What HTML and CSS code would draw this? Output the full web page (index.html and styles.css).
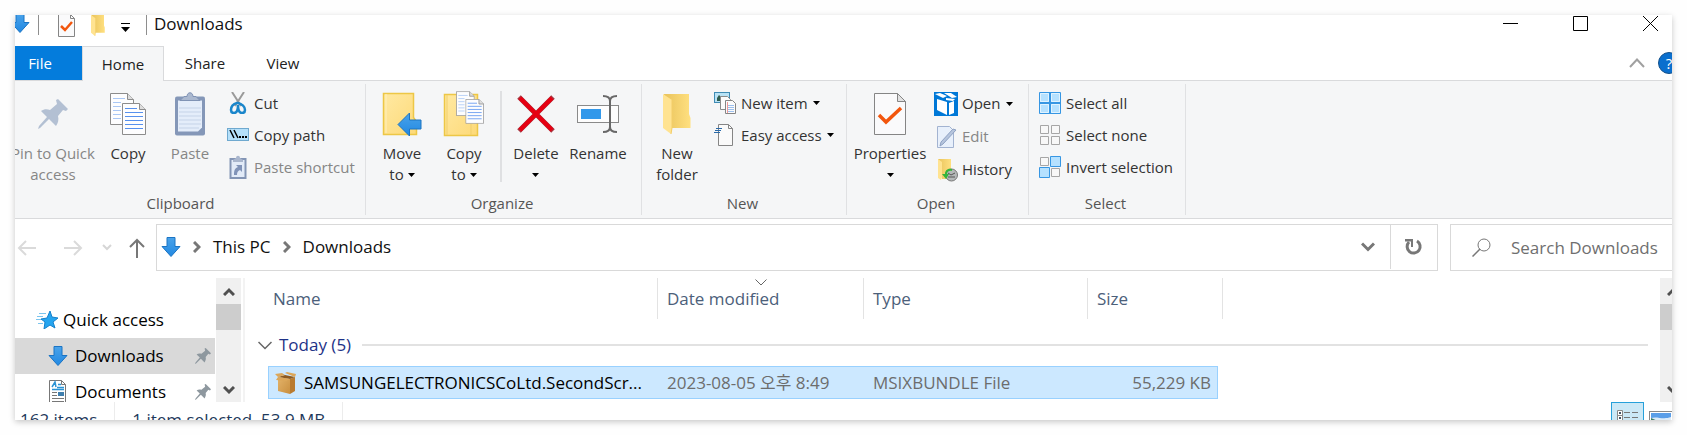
FILE: index.html
```html
<!DOCTYPE html>
<html lang="en">
<head>
<meta charset="utf-8">
<title>Downloads</title>
<link rel="stylesheet" href="styles.css">
</head>
<body>
<svg class="defs" width="0" height="0" aria-hidden="true">
  <defs>
    <linearGradient id="gBlue" x1="0" y1="0" x2="0" y2="1"><stop offset="0" stop-color="#4aa3ea"/><stop offset="1" stop-color="#2188e2"/></linearGradient>
    <linearGradient id="gFolder" x1="0" y1="0" x2="1" y2="1"><stop offset="0" stop-color="#ffe9a2"/><stop offset="1" stop-color="#fdd978"/></linearGradient>
    <linearGradient id="gFolderBack" x1="0" y1="0" x2="1" y2="0"><stop offset="0" stop-color="#e9c35c"/><stop offset="1" stop-color="#ffe080"/></linearGradient>
    <linearGradient id="gBox" x1="0" y1="0" x2="1" y2="1"><stop offset="0" stop-color="#e3b36a"/><stop offset="1" stop-color="#c98f3f"/></linearGradient>
    <symbol id="down" viewBox="0 0 20 20"><path d="M6 .5h8v9h5L10 19.500 1 9.500h5z" fill="url(#gBlue)" stroke="#1b74c4"/></symbol>
    <symbol id="caret" viewBox="0 0 7 4"><path d="M0 0h7L3.500 4z" fill="#000"/></symbol>
    <symbol id="pin" viewBox="0 0 30 30"><path d="M20 0l10 10-2 2-3-1-5 6c1 4 0 7-2 10l-7-7-9 9-2 1 1-3 8-9-6-6c3-2 6-2 9-1l7-6-1-4z"/></symbol>
    <symbol id="page" viewBox="0 0 24 32"><path d="M.5.500h17l6 6v25H.500z" fill="#fdfdfe" stroke="#8c8c8c"/><path d="M17.500.500v6h6" fill="#dedede" stroke="#8c8c8c"/></symbol>
    <symbol id="folder" viewBox="0 0 28 40"><path d="M1 0h25v20l1.500 4v10H5z" fill="url(#gFolderBack)"/><path d="M0 0l9 6v28l-1 6-8-6z" fill="#ffe391"/><path d="M9 6v28l-1 6" fill="none" stroke="#f3cd68"/></symbol>
    <symbol id="check" viewBox="0 0 32 42"><path d="M.5.500h23l8 8v33H.500z" fill="#fafafb" stroke="#858585"/><path d="M23.500.500v8h8z" fill="#e2e2e2" stroke="#858585"/><path d="M5 22l7 7L27 15" fill="none" stroke="#f2560d" stroke-width="3.500"/></symbol>
    <symbol id="chevUp" viewBox="0 0 12 9"><path d="M1 8l5-5 5 5" fill="none" stroke="#505050" stroke-width="3"/></symbol>
    <symbol id="chevDown" viewBox="0 0 12 9"><path d="M1 1l5 5 5-5" fill="none" stroke="#505050" stroke-width="3"/></symbol>
    <symbol id="crumb" viewBox="0 0 8 12"><path d="M1 1l5 5-5 5" fill="none" stroke="#777" stroke-width="3"/></symbol>
  </defs>
</svg>

<div class="window">
<div class="frame">
  <header class="titlebar">
    <div class="quickbar">
      <svg class="qb-down"><use href="#down"/></svg>
      <span class="bar"></span>
      <button class="icon-btn" aria-label="Properties"><svg width="17" height="22" viewBox="0 1 17 22"><path d="M.5.500h12l4 4v18H.500z" fill="#fafafb" stroke="#858585"/><path d="M12.500 0v4.500h4" fill="none" stroke="#858585"/><path d="M3 12l4 4 7-8" fill="none" stroke="#f2560d" stroke-width="2.500"/></svg></button>
      <button class="icon-btn" aria-label="New folder"><svg width="14" height="21" viewBox="0 0 28 40" preserveAspectRatio="none"><use href="#folder"/></svg></button>
      <button class="icon-btn customise" aria-label="Customize toolbar"><svg width="9" height="9" viewBox="0 0 9 9"><path d="M0 .5h9" stroke="#000"/><path d="M0 4h9L4.500 9z"/></svg></button>
      <span class="bar"></span>
    </div>
    <h1 class="title">Downloads</h1>
    <div class="caption">
      <button class="caption-btn" aria-label="Minimize"><svg width="15" height="15"><path d="M0 7.500h15" stroke="#000"/></svg></button>
      <button class="caption-btn" aria-label="Maximize"><svg width="15" height="15"><path d="M.5.500h14v14H.500z" fill="none" stroke="#000"/></svg></button>
      <button class="caption-btn" aria-label="Close"><svg width="15" height="15"><path d="M0 0l15 15M15 0L0 15" stroke="#000"/></svg></button>
    </div>
  </header>

  <nav class="tabs">
    <button class="tab tab-file">File</button>
    <button class="tab tab-active">Home</button>
    <button class="tab">Share</button>
    <button class="tab">View</button>
    <div class="tab-tools">
      <button class="icon-btn" aria-label="Collapse ribbon"><svg width="16" height="10" viewBox="0 0 16 10"><path d="M1 9l7-7.500L15 9" fill="none" stroke="#a0a0a0" stroke-width="2"/></svg></button>
      <button class="help" aria-label="Help">?</button>
    </div>
  </nav>

  <section class="ribbon">
    <div class="group clipboard">
      <div class="tools">
        <button class="big pin-btn disabled"><svg width="30" height="30" fill="#b3c0d3"><use href="#pin"/></svg><span>Pin to Quick<br>access</span></button>
        <button class="big"><svg width="36" height="42" viewBox="0 0 36 42"><g id="pages"><use href="#page" width="24" height="32"/><path d="M3 5.500h12M3 9.500h8M3 13.500h8M3 17.500h8M3 21.500h8M3 25.500h8" stroke="#a9c7f5"/><use href="#page" x="12" y="10" width="24" height="32"/><path d="M15 15.500h12M15 19.500h18M15 23.500h18M15 27.500h18M15 31.500h18M15 35.500h18" stroke="#5690ee"/></g></svg><span>Copy</span></button>
        <button class="big disabled"><svg width="30" height="43" viewBox="0 0 30 43"><rect y="4" width="30" height="39" rx="2" fill="#8497b8"/><path d="M3 8h24v27l-4 4H3z" fill="#e4edfa"/><path d="M4 15.500h22M4 19.500h22M4 23.500h22M4 27.500h22M4 31.500h22M4 35.500h20" stroke="#c5d3e8"/><path d="M5 8l4-4h3c0-5 6-5 6 0h3l4 4z" fill="#aab8cf" stroke="#8093b5"/></svg><span>Paste</span></button>
        <div class="stack">
          <button class="small"><svg width="22" height="22" viewBox="0 0 22 22"><path d="M5 0l9 14M17 0L8 14" stroke="#9a9a9a" stroke-width="2"/><path d="M10 11c-4 1-6 4-6 7 0 2 1 3 3 3 3 0 4-4 4-8 0 4 1 8 4 8 2 0 3-1 3-3 0-3-3-6-7-7z" fill="none" stroke="#1a86cb" stroke-width="2.500"/></svg>Cut</button>
          <button class="small"><svg width="22" height="22" viewBox="0 0 22 22"><rect x=".5" y="4.500" width="21" height="12" fill="#b5e0fa" stroke="#6fa9cf"/><path d="M3 6l4 8M7 6l4 8" stroke="#000" stroke-width="1.500"/><path d="M12 13h2M15 13h2M18 13h2" stroke="#000" stroke-width="2"/></svg>Copy path</button>
          <button class="small disabled"><svg width="22" height="24" viewBox="0 0 22 24"><rect x="3.500" y="4" width="15" height="19" fill="#e2ebf8" stroke="#8395b5" stroke-width="2"/><path d="M6 5l3-2c0-3 4-3 4 0l3 2v2H6z" fill="#a9b6cd"/><path d="M7 20c0-5 1-7 4-8l-2-2h6v7l-2-2c-2 1-3 2-3 5z" fill="#8093b8"/></svg>Paste shortcut</button>
        </div>
      </div>
      <div class="group-name">Clipboard</div>
    </div>

    <div class="group organize">
      <div class="tools">
        <button class="big"><svg width="40" height="44" viewBox="0 0 40 44"><path d="M1.500 1.500h30v24l3 4v13h-33z" fill="url(#gFolder)" stroke="#edc746" stroke-width="1.500"/><path d="M4 2v39" stroke="#fff0ba"/><path d="M16 32.500L27.500 21v7H39v9H27.500v7z" fill="url(#gBlue)" stroke="#1d75c2"/></svg><span>Move<br>to <svg class="caret"><use href="#caret"/></svg></span></button>
        <button class="big"><svg width="42" height="46" viewBox="0 0 42 46"><path d="M1.500 3.500h33v41h-33z" fill="url(#gFolder)" stroke="#edc746" stroke-width="1.500"/><path d="M4 4v40M28 33v11" stroke="#f1cf6a"/><svg x="13" y="0" width="28" height="33" viewBox="0 0 36 42"><use href="#pages"/></svg></svg><span>Copy<br>to <svg class="caret"><use href="#caret"/></svg></span></button>
        <span class="divider"></span>
        <button class="big"><svg width="38" height="38" viewBox="0 0 38 38"><path d="M2 2l34 34M36 2L2 36" stroke="#a9343f" stroke-width="5"/><path d="M3 3l32 32M35 3L3 35" stroke="#e60012" stroke-width="4"/></svg><span>Delete<br><svg class="caret"><use href="#caret"/></svg></span></button>
        <button class="big"><svg width="42" height="38" viewBox="0 0 42 38"><rect x=".5" y="10.500" width="41" height="17" fill="#fdfdfd" stroke="#8a8a8a"/><rect x="4" y="14" width="20" height="10" fill="#3298ea"/><path d="M33 5v28M26 1c5 0 7 2 7 5 0-3 2-5 7-5M26 37c5 0 7-2 7-5 0 3 2 5 7 5" fill="none" stroke="#686868" stroke-width="2"/></svg><span>Rename</span></button>
      </div>
      <div class="group-name">Organize</div>
    </div>

    <div class="group new">
      <div class="tools">
        <button class="big"><svg width="28" height="40"><use href="#folder"/></svg><span>New<br>folder</span></button>
        <div class="stack">
          <button class="small"><svg width="22" height="22" viewBox="0 0 22 22"><rect x=".5" y=".5" width="15" height="10" fill="#b9e2f5" stroke="#3f8bb4"/><path d="M3 9V6l2-3 3 3v3z" fill="#2f5d4e"/><path d="M6.500 4.500h7l3 3v10h-10z" fill="#fbfbfb" stroke="#8b8b8b"/><path d="M11.500 8.500h7l3 3v10h-10z" fill="#fbfbfb" stroke="#858585"/><path d="M14 13.500h6M14 15.500h6M14 17.500h6M14 19.500h6" stroke="#9cc0ee"/><path d="M13.500 10v11" stroke="#e99"/></svg>New item <svg class="caret"><use href="#caret"/></svg></button>
          <button class="small"><svg width="22" height="22" viewBox="0 0 22 22"><path d="M4.500.500h10l4 4v17h-14z" fill="#fafafa" stroke="#858585"/><path d="M14.500.500v4h4" fill="none" stroke="#858585"/><path d="M2 4.500h6M1 6.500h6M0 8.500h6" stroke="#2a6aa9"/></svg>Easy access <svg class="caret"><use href="#caret"/></svg></button>
        </div>
      </div>
      <div class="group-name">New</div>
    </div>

    <div class="group open">
      <div class="tools">
        <button class="big"><svg width="32" height="42"><use href="#check"/></svg><span>Properties<br><svg class="caret"><use href="#caret"/></svg></span></button>
        <div class="stack">
          <button class="small"><svg width="24" height="24" viewBox="0 0 24 24"><rect width="24" height="24" fill="#0078d7"/><path d="M1 2l5-1 7 3-4 2zM10 1h7l6 4-5 1zM3 7l10 3v13l-10-5zM15 11l5-2v12l-5 2zM12 6l9 1-2 2-7-1z" fill="#fff"/></svg>Open <svg class="caret wide"><use href="#caret"/></svg></button>
          <button class="small disabled"><svg width="24" height="22" viewBox="0 0 24 22"><path d="M3.500.500h12l4 4v17h-16z" fill="#e8f0fb" stroke="#a2b3d1"/><path d="M22 4L9 18l-3 2 1-4L19 3z" fill="#b6c5dd" stroke="#8fa2c3"/></svg>Edit</button>
          <button class="small"><svg width="24" height="24" viewBox="0 0 24 24"><path d="M4 1h13v20H8z" fill="url(#gFolderBack)"/><path d="M4 1l4 3v15l-1 3-3-2z" fill="#ffe391"/><circle cx="17.500" cy="17" r="6" fill="#b4b8b8" stroke="#777"/><path d="M14 15l3 2 4-2M14 19h7" fill="none" stroke="#555"/><path d="M18 11c-5-1-7 2-7 5H8l4 5 3-5h-2c0-2 2-4 5-3z" fill="#35b43c"/></svg>History</button>
        </div>
      </div>
      <div class="group-name">Open</div>
    </div>

    <div class="group select">
      <div class="tools">
        <div class="stack">
          <button class="small"><svg width="22" height="22" viewBox="0 0 22 22"><path d="M.5.500h21v21H.500z" fill="#b5e1ff" stroke="#3696e3"/><path d="M1.500 1.500h8v8h-8zM12.500 1.500h8v8h-8zM1.500 12.500h8v8h-8zM12.500 12.500h8v8h-8z" fill="none" stroke="#e0f3ff"/><path d="M11 0v22M0 11h22" stroke="#3696e3" stroke-width="2"/></svg>Select all</button>
          <button class="small"><svg width="22" height="22" viewBox="0 0 22 22"><path d="M1.500 1.500h8v8h-8zM12.500 1.500h8v8h-8zM1.500 12.500h8v8h-8zM12.500 12.500h8v8h-8z" fill="#f8f8f8" stroke="#a6a6a6"/></svg>Select none</button>
          <button class="small"><svg width="22" height="22" viewBox="0 0 22 22"><path d="M1.500 1.500h8v8h-8zM12.500 12.500h8v8h-8z" fill="#f8f8f8" stroke="#a6a6a6"/><path d="M11.500.500h10v10h-10zM.5 11.500h10v10H.500z" fill="#b5e1ff" stroke="#3696e3"/></svg>Invert selection</button>
        </div>
      </div>
      <div class="group-name">Select</div>
    </div>
  </section>

  <div class="location">
    <div class="nav">
      <button class="icon-btn" aria-label="Back"><svg width="20" height="16" viewBox="0 0 20 16"><path d="M19 8H2M9 1L2 8l7 7" fill="none" stroke="#dadada" stroke-width="2"/></svg></button>
      <button class="icon-btn forward" aria-label="Forward"><svg width="20" height="16" viewBox="0 0 20 16"><path d="M1 8h17M11 1l7 7-7 7" fill="none" stroke="#dadada" stroke-width="2"/></svg></button>
      <button class="icon-btn recent" aria-label="Recent locations"><svg width="10" height="8" viewBox="0 0 10 8"><path d="M1 1l4 4 4-4" fill="none" stroke="#d6d6d6" stroke-width="2"/></svg></button>
      <button class="icon-btn up" aria-label="Up"><svg width="16" height="20" viewBox="0 0 16 20"><path d="M8 20V2M1 9l7-7 7 7" fill="none" stroke="#777" stroke-width="2"/></svg></button>
    </div>
    <div class="address">
      <svg width="20" height="20"><use href="#down"/></svg>
      <svg class="crumb"><use href="#crumb"/></svg>
      <a class="crumb-link" href="#">This PC</a>
      <svg class="crumb"><use href="#crumb"/></svg>
      <a class="crumb-link" href="#">Downloads</a>
      <button class="icon-btn history" aria-label="Previous locations"><svg width="14" height="10" viewBox="0 0 14 10"><path d="M1 1.500l6 6 6-6" fill="none" stroke="#777" stroke-width="3"/></svg></button>
      <button class="refresh" aria-label="Refresh"><svg width="18" height="18" viewBox="0 0 18 18"><path d="M12 3a6.500 6.500 0 1 1-8 1" fill="none" stroke="#777" stroke-width="3"/><path d="M0 1h8v8H6V3.500H0z" fill="#777"/></svg></button>
    </div>
    <label class="search">
      <svg width="19" height="19" viewBox="0 0 19 19"><circle cx="12" cy="7" r="6" fill="none" stroke="#777"/><path d="M8 11l-7.500 7.500" stroke="#777" stroke-width="1.500"/></svg>
      <input type="text" placeholder="Search Downloads" aria-label="Search Downloads">
    </label>
  </div>

  <main class="main">
    <aside class="sidebar">
      <a class="side-item root" href="#"><svg width="22" height="18" viewBox="0 0 22 18"><path d="M14 0l2 6 6 1-5 4 2 6-5-3-6 4 1-7-4-3 6-1z" fill="#25a5f0" stroke="#1480cb"/><path d="M3 2.500h7M1 5.500h6M0 8.500h5M2 12.500h5" stroke="#7cc5ee"/></svg><span>Quick access</span></a>
      <a class="side-item current" href="#"><svg width="20" height="20"><use href="#down"/></svg><span>Downloads</span><svg class="pin"><use href="#pin"/></svg></a>
      <a class="side-item" href="#"><svg width="20" height="24" viewBox="0 0 20 24"><path d="M1.500.500h12l4 4v19h-16z" fill="#fff" stroke="#777"/><path d="M13.500.500v4h4" fill="none" stroke="#777"/><path d="M4 7l3-5 1 5M10 4.500h3M9 7.500h7M4 9.500h12" fill="none" stroke="#2a93d5" stroke-width="1.500"/><path d="M4 12.500h5M4 15.500h5M4 18.500h12M4 21.500h12" stroke="#777"/><rect x="10" y="12" width="6" height="4" fill="#3f7fae"/></svg><span>Documents</span><svg class="pin"><use href="#pin"/></svg></a>
    </aside>
    <div class="scroll" aria-hidden="true"><svg class="arrow"><use href="#chevUp"/></svg><span class="thumb"></span><svg class="arrow last"><use href="#chevDown"/></svg></div>
    <div class="files">
      <table class="list">
        <colgroup><col class="c-gutter"><col class="c-name"><col class="c-date"><col class="c-type"><col class="c-size"><col class="c-gap"><col></colgroup>
        <thead>
          <tr><th colspan="2" class="name-head">Name</th><th class="sorted">Date modified<svg class="sort" viewBox="0 0 12 7"><path d="M.5.500L6 6 11.500.500" fill="none" stroke="#666"/></svg></th><th>Type</th><th colspan="2">Size</th><th class="blank"></th></tr>
        </thead>
        <tbody>
          <tr class="section"><td colspan="7"><div class="section-head"><svg width="14" height="9" viewBox="0 0 14 9"><path d="M.5 1L7 7.500 13.500 1" fill="none" stroke="#666" stroke-width="1.500"/></svg><span>Today (5)</span></div></td></tr>
          <tr class="file"><td class="blank"></td>
            <td class="cell first"><div class="file-name"><svg width="22" height="22" viewBox="0 0 22 22"><path d="M3 5l12 2v15L3 19z" fill="url(#gBox)"/><path d="M15 7l5-2v14l-5 3z" fill="#b97b30"/><path d="M3 5l7-2 10 2-5 2z" fill="#8d5a20"/><path d="M0 2l3 3 7-2-3-2zM10 1l2-1 9 2-1 3zM3 5l-2 3 10 1 4-2z" fill="#dca75a"/></svg><span>SAMSUNGELECTRONICSCoLtd.SecondScr...</span></div></td>
            <td class="cell">2023-08-05 오후 8:49</td><td class="cell">MSIXBUNDLE File</td><td class="cell size">55,229 KB</td><td class="blank"></td><td class="blank"></td></tr>
        </tbody>
      </table>
    </div>
    <div class="scroll" aria-hidden="true"><svg class="arrow"><use href="#chevUp"/></svg><span class="thumb"></span><svg class="arrow last"><use href="#chevDown"/></svg></div>
  </main>

  <footer class="status">
    <span class="status-item">162 items</span>
    <span class="status-item">1 item selected&nbsp; 53.9 MB</span>
    <div class="views">
      <button class="view on" aria-label="Details view"><svg width="22" height="18" viewBox="0 0 22 18"><path d="M.5.500h5v5h-5zM.5 5.500h5v5h-5zM.5 10.500h5v5h-5z" fill="#fff" stroke="#888"/><path d="M2 3h2M2 8h2M2 13h2" stroke="#456" stroke-width="2"/><path d="M7 2.500h6M15 2.500h6M7 7.500h6M15 7.500h6M7 12.500h6M15 12.500h6" stroke="#777"/></svg></button>
      <button class="view" aria-label="Large icons view"><svg width="24" height="18" viewBox="0 0 24 18"><rect x=".5" y=".5" width="23" height="17" fill="#fff" stroke="#888"/><rect x="2" y="2" width="20" height="14" fill="#5a9ee8"/><path d="M2 7c6-2 12 2 20-1v3H2z" fill="#dcebf8"/><path d="M2 7l9 4H2z" fill="#3d7d68"/></svg></button>
    </div>
  </footer>
</div>
</div>
</body>
</html>
```
FILE: styles.css
```css
* { box-sizing: border-box; }

body {
  margin: 0;
  height: 100vh;
  padding: 15px;
  background: #fefefe;
  color: #222;
  font-family: "Open Sans", "Noto Sans CJK KR", sans-serif;
  font-size: 17px;
  line-height: 24px;
}

.defs { position: absolute; }
svg { display: block; flex: none; }
a { color: inherit; text-decoration: none; }

button {
  padding: 0;
  border: 0;
  background: none;
  color: inherit;
  font: inherit;
}

.window {
  height: 100%;
  overflow: hidden;
  background: #fff;
  box-shadow: 0 2px 6px rgba(0, 0, 0, .22);
}

/* The content runs on past the visible right edge. */
.frame { margin-right: -13px; }

.titlebar { display: flex; height: 31px; align-items: flex-start; }
.quickbar { display: flex; height: 20px; }
.qb-down { width: 20px; height: 20px; margin: -2px 3px 0 -5px; }
.quickbar .bar { width: 1px; height: 20px; margin-left: 5px; background: #8e8e8e; }
.quickbar .icon-btn { height: 20px; margin-left: 19px; display: flex; align-items: flex-start; }
.quickbar .icon-btn + .icon-btn { margin-left: 16px; }
.quickbar .customise { align-items: center; padding-top: 4px; }
.quickbar .customise + .bar { margin-left: 16px; }
.title { margin: 0 0 0 7px; color: #111; font-size: 17px; font-weight: 400; line-height: 18px; }
.caption { display: flex; margin-left: auto; }
.caption-btn { width: 70px; height: 17px; display: flex; justify-content: center; align-items: center; }

.tabs {
  display: flex;
  height: 35px;
  border-bottom: 1px solid #d9dadc;
  font-size: 15px;
}
.tab { width: 78px; padding: 0; }
.tab-file { width: 67px; padding-right: 17px; background: #047cdc; color: #fff; }
.tab-active { width: 82px; height: 35px; margin-right: 2px; border: 1px solid #d9dadc; border-bottom: 0; background: #f5f6f7; }
.tab-tools { display: flex; align-items: center; gap: 13px; margin-left: auto; padding-right: 5px; }
.help {
  width: 22px;
  height: 22px;
  border: 1px solid #14518b;
  border-radius: 50%;
  background: #0a6fce;
  color: #fff;
  line-height: 20px;
}

.ribbon {
  display: flex;
  height: 138px;
  padding: 3px 0;
  border-bottom: 1px solid #d9dadc;
  background: #f5f6f7;
  font-size: 15px;
  line-height: 21px;
}
.group { display: flex; flex-direction: column; border-right: 1px solid #e0e1e3; }
.tools { display: flex; flex: 1; }
.group-name { padding-right: 3px; color: #555; text-align: center; line-height: 24px; }
.big {
  display: flex;
  flex-direction: column;
  align-items: center;
  width: 62px;
  color: #333;
  white-space: nowrap;
}
.big > svg { height: 46px; margin: 7px 0 6px; }
.big .caret { display: inline-block; vertical-align: 3px; }
.pin-btn { width: 76px; }
.caret { width: 7px; height: 4px; }
.stack { display: flex; flex-direction: column; padding-top: 3px; }
.small { display: flex; align-items: center; gap: 5px; height: 32px; color: #333; white-space: nowrap; }
.small.disabled, .big.disabled { color: #868686; }
.wide { margin-left: 2px; }

.clipboard { width: 351px; }
.clipboard .pin-btn + .big { margin-left: 6px; }
.clipboard .stack { margin-left: 6px; }
.clipboard .group-name { padding-right: 19px; }
.organize { width: 276px; }
.organize .tools { padding-left: 5px; }
.divider { width: 2px; height: 91px; margin: 7px 3px 0 5px; background: #dfe0e2; }
.new { width: 205px; }
.new .tools { padding-left: 4px; }
.new .stack { margin-left: 6px; }
.open { width: 182px; }
.open .tools { padding-left: 7px; }
.open .big { width: 72px; }
.open .stack { margin-left: 8px; }
.open .small { height: 33px; gap: 4px; }
.select { width: 157px; }
.select .tools { padding-left: 10px; }

.location { display: flex; height: 59px; padding: 5px 0 7px; }
.nav { display: flex; align-items: center; padding: 0 11px 0 2px; }
.forward { margin-left: 26px; }
.recent { margin-left: 19px; }
.up { margin-left: 17px; }
.address {
  display: flex;
  flex: 1;
  align-items: center;
  padding: 0 0 1px 4px;
  border: 1px solid #d9d9d9;
  color: #111;
}
.crumb { width: 8px; height: 12px; margin: 0 12px; }
.history { margin: 0 15px 0 auto; }
.refresh {
  display: flex;
  align-self: stretch;
  align-items: center;
  justify-content: center;
  width: 47px;
  border-left: 1px solid #d9d9d9;
}
.search {
  display: flex;
  align-items: center;
  gap: 20px;
  width: 235px;
  margin-left: 12px;
  padding-left: 21px;
  border: 1px solid #d9d9d9;
}
.search input {
  flex: 1;
  min-width: 0;
  padding: 0;
  border: 0;
  background: none;
  font: inherit;
  outline: 0;
}
.search input::placeholder { color: #6f6f6f; opacity: 1; }

.main { display: flex; height: 124px; overflow: hidden; }
.sidebar { width: 200px; padding-top: 24px; color: #000; }
.side-item { display: flex; align-items: center; gap: 7px; height: 36px; padding: 0 4px 0 33px; }
.root { gap: 5px; padding-left: 21px; }
.current { background: #d9d9d9; }
.pin { width: 16px; height: 16px; margin-left: auto; fill: #8e989f; }
.scroll {
  display: flex;
  flex-direction: column;
  align-items: center;
  width: 25px;
  margin-left: 1px;
  background: #f0f0f0;
}
.scroll .arrow { width: 12px; height: 9px; margin: 9px 0 8px; }
.scroll .last { margin: auto 0 7px; }
.thumb { width: 25px; height: 26px; background: #cdcdcd; }
.files { flex: 1; min-width: 0; margin-left: 2px; padding: 0 11px 0 12px; border-left: 2px solid #f3f3f3; }

.list { width: 100%; border-collapse: separate; border-spacing: 0; table-layout: fixed; white-space: nowrap; }
.c-gutter { width: 11px; }
.c-name { width: 390px; }
.c-date { width: 206px; }
.c-type { width: 224px; }
.c-size { width: 130px; }
.c-gap { width: 5px; }
.list th {
  height: 41px;
  padding: 1px 0 0 9px;
  border-right: 1px solid #e3e3e3;
  color: #4c607a;
  font-weight: 400;
  text-align: left;
}
.list .name-head { padding-left: 16px; }
.list .blank { padding: 0; border: 0; }
.sorted { position: relative; }
.sort { position: absolute; top: 1px; left: 50%; width: 12px; height: 7px; margin-left: -6px; }
.section td { height: 47px; padding: 5px 0 0 1px; color: #1e3287; }
.section-head { display: flex; align-items: center; gap: 7px; }
.section-head::after { content: ""; flex: 1; height: 2px; margin-left: 4px; background: #e2e2e2; }
.cell {
  height: 33px;
  padding: 0 0 0 9px;
  border: solid #99d1ff;
  border-width: 1px 0;
  background: #cce8ff;
  color: #6d6d6d;
}
.cell.first { padding-left: 6px; border-left-width: 1px; color: #000; }
.cell.size { padding: 0 6px 0 0; border-right-width: 1px; text-align: right; }
.file-name { display: flex; align-items: center; gap: 7px; }

.status { display: flex; height: 36px; color: #1e395b; }
.status-item { padding: 6px 17px 0 5px; border-right: 1px solid #ececec; }
.status-item + .status-item { padding-left: 17px; }
.views { display: flex; margin-left: auto; }
.view { display: flex; align-items: flex-start; justify-content: center; width: 33px; padding-top: 9px; }
.view.on { padding-top: 7px; border: 1px solid #26a0da; background: #cbe8f6; }
.view + .view { margin-right: 8px; }
```
